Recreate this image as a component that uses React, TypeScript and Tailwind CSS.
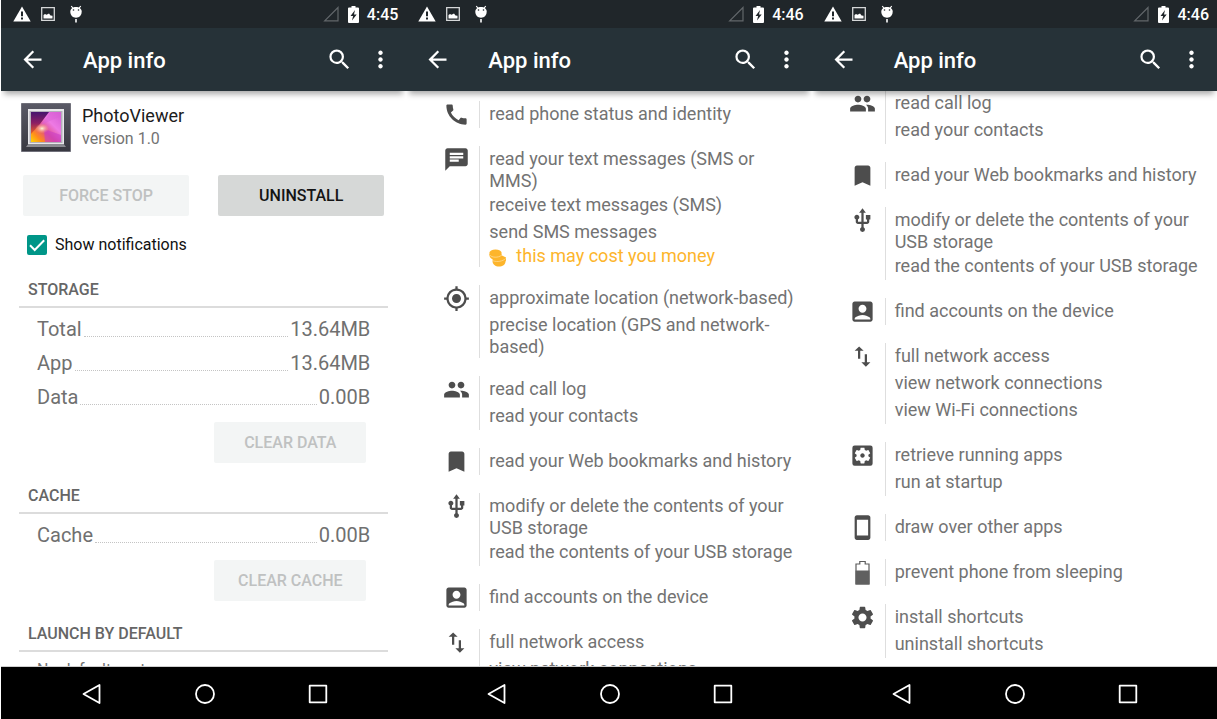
import React, { useState } from 'react';
import type { ReactNode } from 'react';
import {
  MdAccountBox,
  MdArrowBack,
  MdBookmark,
  MdCall,
  MdChat,
  MdImportExport,
  MdMoreVert,
  MdMyLocation,
  MdPeople,
  MdSearch,
  MdSettings,
  MdSettingsApplications,
  MdStayPrimaryPortrait,
  MdUsb,
} from 'react-icons/md';

type PermissionGroup = {
  id: string;
  icon: ReactNode;
  items: string[];
  cost?: string;
};

const BatteryIcon = () => (
  <svg viewBox="0 0 27 27" className="size-[27px]" aria-hidden="true">
    <path d="M7 25V5h3.800V2.500h5.400V5H20v20z" fill="none" stroke="#5c5c5c" strokeWidth="1.200" />
    <path d="M6.500 11.500h14v14h-14z" fill="#606060" />
  </svg>
);

const contacts: PermissionGroup = { id: 'contacts', icon: <MdPeople />, items: ['read call log', 'read your contacts'] };
const bookmarks: PermissionGroup = { id: 'bookmarks', icon: <MdBookmark />, items: ['read your Web bookmarks and history'] };
const usb: PermissionGroup = {
  id: 'usb',
  icon: <MdUsb />,
  items: ['modify or delete the contents of your USB storage', 'read the contents of your USB storage'],
};
const accounts: PermissionGroup = { id: 'accounts', icon: <MdAccountBox />, items: ['find accounts on the device'] };
const network: PermissionGroup = {
  id: 'network',
  icon: <MdImportExport />,
  items: ['full network access', 'view network connections', 'view Wi-Fi connections'],
};

const firstGroups: PermissionGroup[] = [
  { id: 'phone', icon: <MdCall />, items: ['read phone status and identity'] },
  {
    id: 'sms',
    icon: <MdChat />,
    items: ['read your text messages (SMS or MMS)', 'receive text messages (SMS)', 'send SMS messages'],
    cost: 'this may cost you money',
  },
  {
    id: 'location',
    icon: <MdMyLocation />,
    items: ['approximate location (network-based)', 'precise location (GPS and network-based)'],
  },
  contacts,
  bookmarks,
  usb,
  accounts,
  network,
];

const lastGroups: PermissionGroup[] = [
  contacts,
  bookmarks,
  usb,
  accounts,
  network,
  { id: 'running', icon: <MdSettingsApplications />, items: ['retrieve running apps', 'run at startup'] },
  { id: 'draw', icon: <MdStayPrimaryPortrait />, items: ['draw over other apps'] },
  { id: 'sleep', icon: <BatteryIcon />, items: ['prevent phone from sleeping'] },
  { id: 'shortcuts', icon: <MdSettings />, items: ['install shortcuts', 'uninstall shortcuts'] },
];

const StatusBar = ({ time }: { time: string }) => (
  <div className="flex h-7 items-center bg-[#20262a] pl-3 pr-2 text-white">
    <svg viewBox="0 0 18 16" className="h-4 w-[18px]" aria-hidden="true">
      <path d="M9 .5L17.700 15.500H.3z" fill="#fff" />
      <path d="M8 5.500h2v4.700H8zM8 11.500h2v2H8z" fill="#20262a" />
    </svg>
    <svg viewBox="0 0 14 14" className="ml-[10px] size-[14px]" aria-hidden="true">
      <path d="M.7.700h12.600v12.600H.7z" fill="none" stroke="#d5d7d8" strokeWidth="1.300" />
      <path d="M2.500 11.500V8l1.500-1 1.500.8L8 6.500l1.500 2 2 .3v2.700z" fill="#fff" />
    </svg>
    <svg viewBox="0 0 14 18" className="ml-[14px] h-[18px] w-[14px]" aria-hidden="true">
      <path d="M2.300 1l1.800 2.500M11.700 1L9.900 3.500" stroke="#fff" strokeWidth="1.200" />
      <path d="M1.300 6.500C1.300 3.800 3.800 2 7 2s5.700 1.800 5.700 4.500c0 3.500-2.200 6.200-5.700 6.200S1.300 10 1.300 6.500z" fill="#fff" />
      <path d="M7 14v3.500" stroke="#fff" strokeWidth="1.600" />
      <circle cx="4.500" cy="5" r=".8" fill="#20262a" />
      <circle cx="9.500" cy="5" r=".8" fill="#20262a" />
    </svg>
    <svg viewBox="0 0 16 16" className="ml-auto size-4" aria-hidden="true">
      <path d="M15 1.500v13.300H1.700z" fill="none" stroke="#62676a" strokeWidth="1.200" />
    </svg>
    <svg viewBox="0 0 11 17" className="ml-[9px] h-[17px] w-[11px]" aria-hidden="true">
      <path d="M3.500 0h4v1.500H10a1 1 0 011 1V16a1 1 0 01-1 1H1a1 1 0 01-1-1V2.500a1 1 0 011-1h2.500z" fill="#fff" />
      <path d="M7 4L2.500 10h2.600L4 14.500 8.700 8.500H6z" fill="#20262a" />
    </svg>
    <span className="ml-2 pt-[2px] text-base leading-5 font-medium">{time}</span>
  </div>
);

const ActionBar = () => (
  <header className="flex h-[63px] items-center bg-[#263238] pl-[18px] pr-3 text-[27px] text-white">
    <button type="button" aria-label="Back">
      <MdArrowBack />
    </button>
    <h1 className="ml-[37px] flex-1 pt-[2px] text-[22px] leading-8 font-medium">App info</h1>
    <button type="button" aria-label="Search" className="mr-[14px]">
      <MdSearch />
    </button>
    <button type="button" aria-label="More options">
      <MdMoreVert />
    </button>
  </header>
);

const NavBar = () => (
  <nav className="flex h-[53px] shrink-0 items-center justify-center gap-[91px] border-t border-[#cfcfcf] bg-black pt-[2px] pl-[2px]">
    <button type="button" aria-label="Back">
      <svg viewBox="0 0 22 22" className="size-[22px]">
        <path d="M18.500 2v18L2.500 11z" fill="none" stroke="#fff" strokeWidth="1.800" strokeLinejoin="round" />
      </svg>
    </button>
    <button type="button" aria-label="Home">
      <svg viewBox="0 0 22 22" className="size-[22px]">
        <circle cx="11" cy="11" r="9" fill="none" stroke="#fff" strokeWidth="1.800" />
      </svg>
    </button>
    <button type="button" aria-label="Recent apps">
      <svg viewBox="0 0 22 22" className="size-[22px]">
        <path d="M2.700 2.700h16.600v16.600H2.700z" fill="none" stroke="#fff" strokeWidth="1.800" strokeLinejoin="round" />
      </svg>
    </button>
  </nav>
);

const Phone = ({ time, alignEnd, children }: { time: string; alignEnd?: boolean; children: ReactNode }) => (
  <section className="flex min-w-0 flex-1 flex-col overflow-hidden">
    <div className="relative z-10 shrink-0 shadow-[0_6px_6px_-3px_rgba(0,0,0,0.35)]">
      <StatusBar time={time} />
      <ActionBar />
    </div>
    <main className={`flex min-h-0 flex-1 flex-col overflow-hidden ${alignEnd ? 'justify-end' : ''}`}>{children}</main>
    <NavBar />
  </section>
);

const CoinsIcon = () => (
  <svg viewBox="0 0 18 18" className="size-[18px] shrink-0" aria-hidden="true">
    <path d="M3.500 12c0 3.500 3 5.500 6.500 5.500s6.500-2 6.500-5l.5-1V8.500l-4-2-9 3z" fill="#fdb52b" />
    <path d="M.3 5c0 4 3 6 6.700 6 4 0 6-2.500 5.600-6z" fill="#fdb52b" />
    <ellipse cx="6.500" cy="4" rx="6.200" ry="3.600" fill="#fdb52b" />
    <path d="M.5 5.800c2 3 9 3.200 12 .4M4 11.800c4.500 1.500 9.500.5 12.800-2.300" fill="none" stroke="#ffe0a0" strokeWidth=".7" />
  </svg>
);

const PermissionList = ({ groups }: { groups: PermissionGroup[] }) => (
  <ul className="flex shrink-0 flex-col gap-[18px] pt-[10px] pr-4 pb-2 pl-[37px]">
    {groups.map((group) => (
      <li key={group.id} className="flex">
        <span className="text-[27px] text-[#4d4d4d]">{group.icon}</span>
        <div className="ml-[9px] flex-1 border-l border-[#dedede] pl-[9px] text-lg text-[#737373]">
          {group.items.map((item) => (
            <p key={item} className="min-h-[27px] pt-[2px] leading-[22px]">
              {item}
            </p>
          ))}
          {group.cost && (
            <p className="flex items-start gap-[9px] leading-5 text-[#fdb52b]">
              <span className="pt-[3px]">
                <CoinsIcon />
              </span>
              {group.cost}
            </p>
          )}
        </div>
      </li>
    ))}
  </ul>
);

const AppIcon = () => (
  <svg viewBox="0 0 50 50" className="size-[50px]" aria-hidden="true">
    <defs>
      <linearGradient id="frame" x1="0" y1="0" x2="0" y2="1">
        <stop offset="0" stopColor="#5a5a66" />
        <stop offset="1" stopColor="#383840" />
      </linearGradient>
      <linearGradient id="photo" x1="0" y1="1" x2="1" y2="0">
        <stop offset="0" stopColor="#ffd800" />
        <stop offset=".2" stopColor="#ff8a1e" />
        <stop offset=".42" stopColor="#e0508c" />
        <stop offset=".65" stopColor="#ee7ae4" />
        <stop offset="1" stopColor="#d25ad2" />
      </linearGradient>
      <linearGradient id="shade" x1="0" y1="0" x2="0" y2="1">
        <stop offset="0" stopColor="#46146e" />
        <stop offset=".5" stopColor="#8c1e64" />
        <stop offset="1" stopColor="#f0641e" />
      </linearGradient>
      <radialGradient id="glow">
        <stop offset="0" stopColor="#fff6d8" />
        <stop offset="1" stopColor="#ffb070" stopOpacity="0" />
      </radialGradient>
    </defs>
    <path d="M.5.500h49v48H.5z" fill="url(#frame)" stroke="#70707a" />
    <path d="M5 44l3-4h34l3 4z" fill="#8c8c92" />
    <path d="M7 6h36v35H7z" fill="#e8e8ea" />
    <path d="M8.500 8h33v32h-33z" fill="#b4b0ba" />
    <path d="M10 9h30v30H10z" fill="url(#photo)" />
    <path d="M10 9h18l-9 12-9 10z" fill="url(#shade)" />
    <path d="M20 22L30 9h10v4z" fill="#dc64d8" opacity=".5" />
    <path d="M23 26l17 6v7H24z" fill="#c83cc8" opacity=".6" />
    <ellipse cx="21" cy="25.500" rx="7" ry="5" fill="url(#glow)" />
  </svg>
);

const SectionHeading = ({ children }: { children: ReactNode }) => (
  <h2 className="border-b-2 border-[#dcdcdc] pt-[23px] pb-[6px] pl-[9px] text-base leading-5 font-medium text-[#666666]">
    {children}
  </h2>
);

const SizeList = ({ rows }: { rows: [string, string][] }) => (
  <dl className="px-[18px] pt-1 text-xl text-[#707070]">
    {rows.map(([label, value]) => (
      <div key={label} className="flex h-[34px] items-center">
        <dt>{label}</dt>
        <span className="mx-[2px] h-4 flex-1 border-b border-dotted border-[#c4c4c4]" />
        <dd>{value}</dd>
      </div>
    ))}
  </dl>
);

const disabledButton = 'h-[41px] rounded-xs bg-[#f3f5f5] text-base font-medium text-[#bfc1c1]';

const AppDetails = () => {
  const [notify, setNotify] = useState(true);

  return (
    <div className="shrink-0">
      <div className="flex gap-[11px] px-5 pt-3">
        <AppIcon />
        <div>
          <p className="text-lg leading-[26px] text-[#1c1c1c]">PhotoViewer</p>
          <p className="text-base leading-5 text-[#737373]">version 1.0</p>
        </div>
      </div>

      <div className="mt-[22px] grid grid-cols-2 gap-[29px] px-[22px]">
        <button type="button" disabled className={disabledButton}>
          FORCE STOP
        </button>
        <button type="button" className="h-[41px] rounded-xs bg-[#d6d8d7] text-base font-medium text-[#141414]">
          UNINSTALL
        </button>
      </div>

      <label className="mt-[17px] flex h-6 items-center gap-2 px-[26px] text-base text-[#111111]">
        <span className="relative flex">
          <input
            type="checkbox"
            checked={notify}
            onChange={(e) => setNotify(e.target.checked)}
            className="peer size-5 appearance-none rounded-xs border-2 border-[#009688] checked:bg-[#009688]"
          />
          <svg viewBox="0 0 20 20" className="pointer-events-none absolute inset-0 hidden size-5 peer-checked:block">
            <path d="M3 10.300l4.700 4.700L17.200 5.300" fill="none" stroke="#fff" strokeWidth="2" />
          </svg>
        </span>
        Show notifications
      </label>

      <div className="px-[18px]">
        <SectionHeading>STORAGE</SectionHeading>
        <SizeList rows={[['Total', '13.64MB'], ['App', '13.64MB'], ['Data', '0.00B']]} />
        <div className="mt-2 flex justify-end pr-[22px]">
          <button type="button" disabled className={`${disabledButton} w-[152px]`}>
            CLEAR DATA
          </button>
        </div>

        <SectionHeading>CACHE</SectionHeading>
        <SizeList rows={[['Cache', '0.00B']]} />
        <div className="mt-2 flex justify-end pr-[22px]">
          <button type="button" disabled className={`${disabledButton} w-[152px]`}>
            CLEAR CACHE
          </button>
        </div>

        <SectionHeading>LAUNCH BY DEFAULT</SectionHeading>
        <p className="px-[18px] pt-2 text-base leading-5 text-[#737373]">No defaults set.</p>
      </div>
    </div>
  );
};

export default function App() {
  return (
    <div className="flex h-screen bg-white pl-px font-[Roboto,sans-serif]">
      <Phone time="4:45">
        <AppDetails />
      </Phone>
      <Phone time="4:46">
        <PermissionList groups={firstGroups} />
      </Phone>
      <Phone time="4:46" alignEnd>
        <PermissionList groups={lastGroups} />
      </Phone>
    </div>
  );
}
